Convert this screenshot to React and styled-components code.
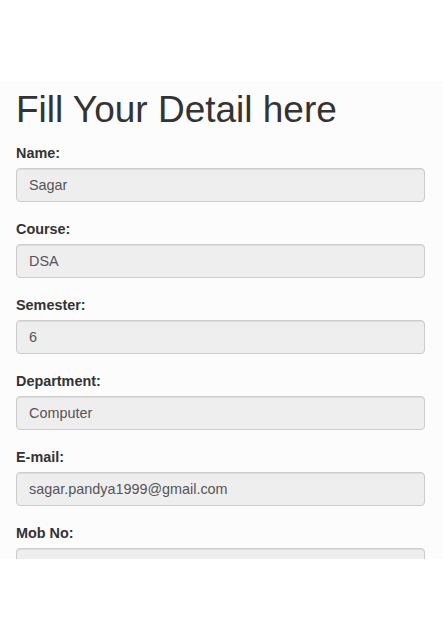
import React from "react";
import styled, { createGlobalStyle } from "styled-components";

const Global = createGlobalStyle`
  html, body { margin: 0; padding: 0; background: #ffffff; }
  body { font-family: "Liberation Sans", Arial, Helvetica, sans-serif; font-size: 14px; color: #333; }
  * { box-sizing: border-box; }
`;

const Panel = styled.div`
  margin-top: 81px;
  height: 478px;
  overflow: hidden;
  background: #fcfcfc;
  padding: 9px 18px 0 16px;
`;

const Title = styled.h1`
  margin: 0 0 13px;
  font-family: "Liberation Sans", Arial, sans-serif;
  font-size: 37px;
  font-weight: 400;
  line-height: 40px;
  color: #333;
`;

const Group = styled.div`
  margin-bottom: 17px;
`;

const Label = styled.label`
  display: block;
  margin-bottom: 5px;
  font-size: 14.4px;
  line-height: 20px;
  font-weight: 700;
  color: #333;
`;

const Field = styled.input`
  display: block;
  width: 100%;
  height: 34px;
  padding: 6px 12px;
  font-family: "Liberation Sans", Arial, sans-serif;
  font-size: 14.4px;
  line-height: 20px;
  color: #555;
  background: #eeeeee;
  border: 1px solid #cccccc;
  border-radius: 4px;
  box-shadow: inset 0 1px 1px rgba(0, 0, 0, 0.075);
  outline: none;
`;

const fields = [
  ["Name:", "Sagar"],
  ["Course:", "DSA"],
  ["Semester:", "6"],
  ["Department:", "Computer"],
  ["E-mail:", "sagar.pandya1999@gmail.com"],
  ["Mob No:", ""],
];

export default function App() {
  return (
    <>
      <Global />
      <Panel>
        <Title>Fill Your Detail here</Title>
        {fields.map(([label, value]) => (
          <Group key={label}>
            <Label>{label}</Label>
            <Field readOnly value={value} />
          </Group>
        ))}
      </Panel>
    </>
  );
}
